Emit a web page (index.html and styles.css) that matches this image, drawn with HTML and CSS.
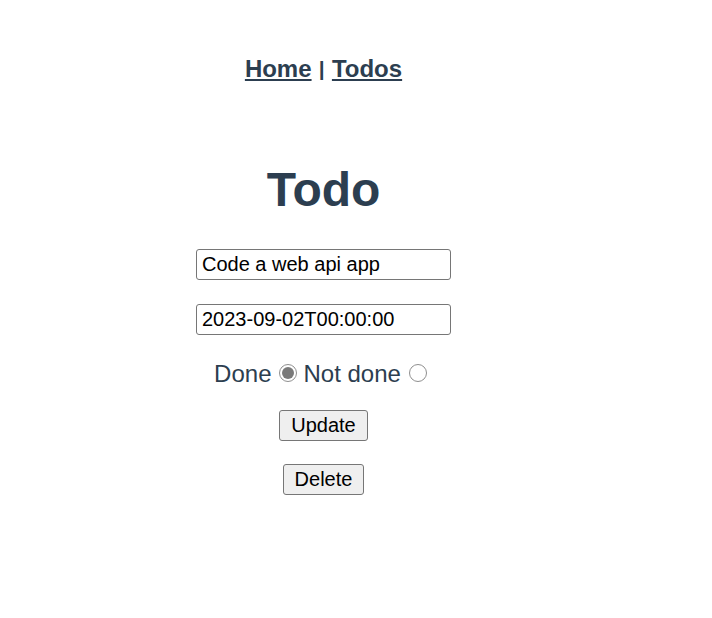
FILE: index.html
```html
<!DOCTYPE html>
<html lang="en">
<head>
<meta charset="utf-8">
<title>Todo</title>
<link rel="stylesheet" href="styles.css">
</head>
<body>
<div class="app">
  <nav class="nav">
    <a href="#" class="nav-link">Home</a> <span class="sep">|</span> <a href="#" class="nav-link">Todos</a>
  </nav>
  <main class="todo">
    <h1 class="title">Todo</h1>
    <input class="field" type="text" value="Code a web api app">
    <input class="field field-date" type="text" value="2023-09-02T00:00:00">
    <div class="status">
      <span>Done</span>
      <input class="radio" type="radio" name="done" checked disabled>
      <span>Not done</span>
      <input class="radio" type="radio" name="done" disabled>
    </div>
    <button class="btn btn-update" type="button">Update</button>
    <button class="btn" type="button">Delete</button>
  </main>
</div>
</body>
</html>
```
FILE: styles.css
```css
html, body {
  margin: 0;
  padding: 0;
  background: #ffffff;
}

body {
  font-family: "Liberation Sans", Arial, Helvetica, sans-serif;
  color: #2c3e50;
}

.app {
  width: 647px;
  text-align: center;
}

.nav {
  padding-top: 55px;
  font-size: 24px;
  line-height: normal;
  height: 28px;
}

.nav-link {
  color: #2c3e50;
  font-weight: bold;
  text-decoration: underline;
}

.sep {
  display: inline-block;
  width: 7px;
  font-size: 21px;
  font-weight: bold;
  color: #2c3e50;
  vertical-align: 1px;
  text-align: center;
  line-height: 1;
}

.todo {
  display: flex;
  flex-direction: column;
  align-items: center;
  gap: 23px;
}

.title {
  font-size: 48px;
  font-weight: bold;
  margin: 79px 0 9px 0;
  line-height: 55px;
}

.field {
  box-sizing: border-box;
  width: 255px;
  height: 31px;
  padding: 3px 5px;
  font-family: "Liberation Sans", Arial, sans-serif;
  font-size: 20px;
  color: #000;
  border: 1px solid #767676;
  border-radius: 3px;
  background: #fff;
}

.field-date {
  margin-top: 1px;
}

.status {
  display: flex;
  align-items: center;
  font-size: 24px;
  line-height: 28px;
  height: 28px;
  margin-top: 2px;
}

.radio {
  appearance: none;
  -webkit-appearance: none;
  box-sizing: border-box;
  width: 18px;
  height: 18px;
  margin: -2px 6px 0 8px;
  border: 1px solid #8f8f8f;
  border-radius: 50%;
  background: #fff;
  position: relative;
}

.radio:checked::after {
  content: "";
  position: absolute;
  left: 2px;
  top: 2px;
  width: 12px;
  height: 12px;
  border-radius: 50%;
  background: #7a7a7a;
}

.btn {
  box-sizing: border-box;
  height: 31px;
  padding: 2px 11px;
  font-family: "Liberation Sans", Arial, sans-serif;
  font-size: 20px;
  color: #000;
  background: #efefef;
  border: 1px solid #767676;
  border-radius: 3px;
}

.btn-update {
  margin-top: -1px;
}
```
